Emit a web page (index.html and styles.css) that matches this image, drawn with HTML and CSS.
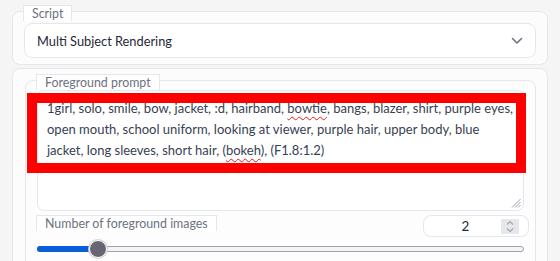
FILE: index.html
```html
<!DOCTYPE html>
<html lang="en">
<head>
    <meta charset="UTF-8">
    <meta name="viewport" content="width=device-width, initial-scale=1.0">
    <title>Multi Subject Rendering</title>
    <link rel="stylesheet" href="styles.css">
</head>
<body>

<div class="page">
    <!-- Script selector -->
    <div class="block script-block">
        <span class="block-label">Script</span>
        <div class="dropdown">
            <span>Multi Subject Rendering</span>
            <svg class="chevron" width="12" height="8" viewBox="0 0 12 8">
                <polyline points="1.5,1.5 6,6 10.5,1.5" fill="none" stroke="#6b7280" stroke-width="1.6" stroke-linecap="round" stroke-linejoin="round"/>
            </svg>
        </div>
    </div>

    <!-- Foreground settings -->
    <div class="block group-block">
        <div class="block inner-block">
            <span class="block-label">Foreground prompt</span>
            <div class="textarea">
                <div class="line">1girl, solo, smile, bow, jacket, :d, hairband, <span class="typo">bowtie</span>, bangs, blazer, shirt, purple eyes,</div>
                <div class="line">open mouth, school uniform, looking at viewer, purple hair, upper body, blue</div>
                <div class="line">jacket, long sleeves, short hair, (<span class="typo">bokeh</span>), (F1.8:1.2)</div>
                <svg class="resize" width="10" height="10" viewBox="0 0 10 10">
                    <line x1="1" y1="9.5" x2="9.5" y2="1" stroke="#9ca3af" stroke-width="1"/>
                    <line x1="4" y1="9.5" x2="9.5" y2="4" stroke="#9ca3af" stroke-width="1"/>
                    <line x1="7" y1="9.5" x2="9.5" y2="7" stroke="#9ca3af" stroke-width="1"/>
                </svg>
            </div>
            <div class="highlight"></div>

            <div class="number-row">
                <span class="block-label">Number of foreground images</span>
                <div class="number-input">
                    <span class="number-value">2</span>
                    <div class="spinner">
                        <svg width="10" height="13" viewBox="0 0 10 13">
                            <polyline points="2,4.5 5,1.5 8,4.5" fill="none" stroke="#9ca3af" stroke-width="1.2"/>
                            <polyline points="2,8.5 5,11.5 8,8.5" fill="none" stroke="#9ca3af" stroke-width="1.2"/>
                        </svg>
                    </div>
                </div>
            </div>

            <div class="slider">
                <div class="track"></div>
                <div class="fill" style="width: 60px;"></div>
                <div class="thumb" style="left: 60px;"></div>
            </div>
        </div>
    </div>
</div>

</body>
</html>
```

FILE: styles.css
```css
html, body {
    overflow: hidden;
}
body {
    font-family: 'Source Sans Pro', Lato, sans-serif;
    margin: 0;
    padding: 0;
    background-color: #f5f5f6;
    color: #374151;
    font-size: 13px;
}
.page {
    padding: 11px 12px 0 12px;
}
.block {
    border: 1px solid #e5e7eb;
    border-radius: 8px;
    background-color: #fcfcfc;
}
.block-label {
    display: block;
    width: fit-content;
    height: 15px;
    line-height: 15px;
    padding: 0 8px;
    margin: -7px 0 0 -1px;
    border: 1px solid #e5e7eb;
    border-bottom: none;
    background-color: #fff;
    color: #6b7280;
    font-size: 12.4px;
}
.script-block {
    padding: 0 11px 6px 11px;
}
.dropdown {
    margin-top: 2px;
    height: 33px;
    border: 1px solid #e5e7eb;
    border-radius: 8px;
    background-color: #fff;
    display: flex;
    align-items: center;
    justify-content: space-between;
    padding: 0 12px 0 12px;
    color: #1f2937;
    font-size: 12.8px;
}
.chevron {
    display: block;
    margin-top: 1px;
}
.group-block {
    margin-top: 3px;
    padding: 11px 11px 0 12px;
    height: 220px;
    border-bottom-left-radius: 0;
    border-bottom-right-radius: 0;
}
.inner-block {
    position: relative;
    padding: 0 11px 10px 11px;
    height: 200px;
    background-color: #fdfdfd;
}
.textarea {
    position: relative;
    height: 112px;
    border: 1px solid #e5e7eb;
    border-radius: 7px;
    background-color: #fff;
    padding: 7px 0 0 9px;
    line-height: 21px;
    white-space: nowrap;
    color: #374151;
}
.typo {
    text-decoration: underline wavy #e11d1d;
    text-decoration-thickness: 1px;
    text-underline-offset: 3px;
}
.resize {
    position: absolute;
    right: 2px;
    bottom: 2px;
}
/* annotation box over the prompt */
.highlight {
    position: absolute;
    left: 1px;
    top: 12px;
    width: 479px;
    height: 60px;
    border: 10px solid #ff0000;
}
.number-row {
    margin-top: 4px;
    display: flex;
    justify-content: space-between;
    align-items: flex-start;
    margin-right: -5px;
}
.number-row .block-label {
    margin-top: 0;
}
.number-input {
    width: 104px;
    height: 20px;
    border: 1px solid #e5e7eb;
    border-radius: 8px;
    background-color: #fff;
    display: flex;
    align-items: center;
}
.number-value {
    flex-grow: 1;
    text-align: center;
    padding-left: 6px;
    font-size: 13.5px;
    color: #1f2937;
}
.spinner {
    width: 18px;
    height: 15px;
    margin-right: 9px;
    background-color: #e5e7eb;
    display: flex;
    align-items: center;
    justify-content: center;
}
.slider {
    position: relative;
    margin-top: 2px;
    height: 18px;
}
.track {
    position: absolute;
    left: 0;
    right: 0;
    top: 7px;
    height: 4px;
    border: 1px solid #a1a1aa;
    border-radius: 3px;
    background-color: #f3f4f6;
}
.fill {
    position: absolute;
    left: 0;
    top: 7px;
    height: 6px;
    border-radius: 3px 0 0 3px;
    background-color: #0a5fd8;
}
.thumb {
    position: absolute;
    top: 1px;
    width: 16px;
    height: 16px;
    margin-left: -8px;
    border-radius: 50%;
    background-color: #676673;
    border: 1px solid #fff;
    box-shadow: 0 0 0 1px #d4d4d8;
}
```
